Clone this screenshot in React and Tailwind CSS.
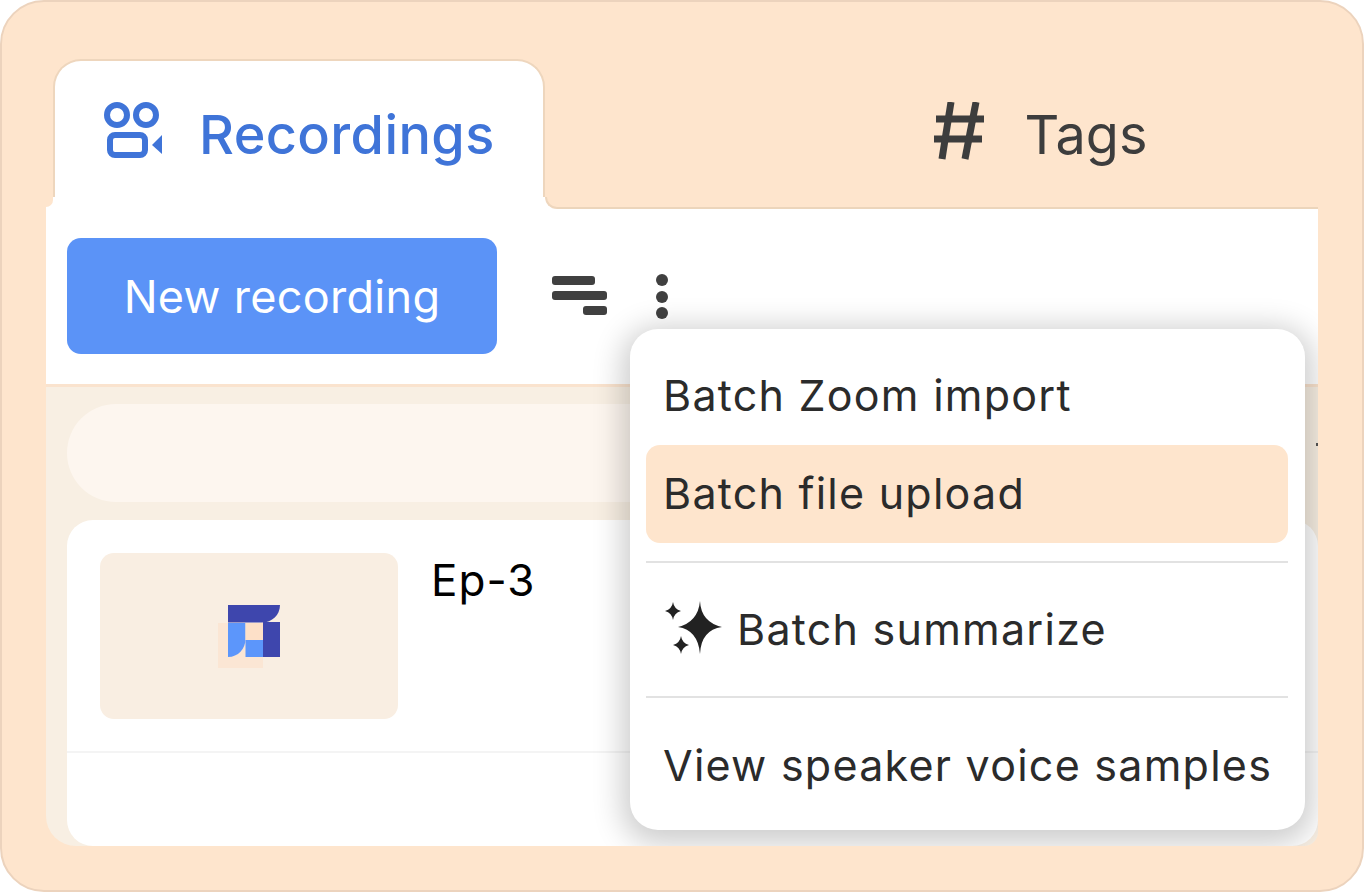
export default function App() {
  const font = "font-['Inter','Liberation_Sans',sans-serif]";
  return (
    <div className={`w-[1364px] h-[892px] bg-white ${font}`}>
      <div className="w-full h-full rounded-[44px] bg-[#fee5cd] border-2 border-[#ecd3bd] pt-[57px] px-[44px] pb-[44px] flex flex-col">
        <div className="flex h-[148px] shrink-0 relative z-10">
          <div className="relative ml-[7px] w-[492px] h-[150px] bg-white rounded-t-[28px] border-x-2 border-t-2 border-[#eed6bd] flex items-start pt-[41px] pl-[47px]">
            <svg width="60" height="60" viewBox="0 0 60 60" className="shrink-0 -mt-[1px]">
              <g fill="none" stroke="#3f74d8" strokeWidth="6">
                <circle cx="15" cy="14" r="10" />
                <circle cx="44" cy="14" r="10" />
                <rect x="8" y="34" width="35" height="20" rx="5" />
              </g>
              <path d="M50 44 L60 34 V53 Z" fill="#3f74d8" />
            </svg>
            <span className="ml-[37px] text-[54px] leading-[66px] font-medium tracking-[0.4px] text-[#3f74d8]">Recordings</span>
            <div className="absolute -left-[2px] -right-[2px] bottom-0 h-[12px] bg-white" />
            <div className="absolute -right-[14px] bottom-0 w-[12px] h-[12px] bg-white">
              <div className="w-full h-full bg-[#fee5cd] rounded-bl-[12px] border-l-2 border-b-2 border-[#eed6bd]" />
            </div>
            <div className="absolute -left-[9px] bottom-0 w-[7px] h-[10px] bg-white">
              <div className="w-full h-[8px] bg-[#fee5cd] rounded-br-[8px]" />
            </div>
          </div>
          <div className="ml-[249px] w-[492px] flex items-start justify-center pt-[43px]">
            <svg width="60" height="64" viewBox="0 0 60 64" className="shrink-0">
              <g stroke="#3d3d3d" strokeWidth="7" fill="none">
                <path d="M3 17 H51" />
                <path d="M1 37 H49" />
                <path d="M18 0 L9 57" />
                <path d="M43 0 L32 57" />
              </g>
            </svg>
            <span className="ml-[32px] text-[54px] leading-[66px] text-[#3d3d3d]">Tags</span>
          </div>
        </div>
        <div className="relative flex-1 min-h-0 flex flex-col overflow-hidden rounded-bl-[30px] rounded-br-[14px] bg-[#f8efe3]">
          <div className="h-[180px] shrink-0 bg-white border-t-2 border-b-[3px] border-t-[#ecd5bb] border-b-[#fae3ce] flex items-start pt-[29px] pl-[21px]">
            <button className="w-[430px] h-[116px] rounded-[14px] bg-[#5b93f7] text-white text-[45px] tracking-[0.3px] leading-none">New recording</button>
            <svg width="130" height="60" viewBox="0 0 130 60" className="ml-[55px] mt-[29px] shrink-0">
              <g fill="#404040">
                <rect x="0" y="9" width="43" height="9" rx="3" />
                <rect x="0" y="24" width="55" height="9" rx="3" />
                <rect x="31" y="39" width="24" height="9" rx="3" />
                <circle cx="110" cy="13" r="6" />
                <circle cx="110" cy="30" r="6" />
                <circle cx="110" cy="46" r="6" />
              </g>
            </svg>
          </div>
          <div className="flex-1 min-h-0 flex flex-col px-[21px] pt-[17px]">
            <div className="h-[98px] shrink-0 rounded-full bg-[#fdf6ef]" />
            <div className="mt-[18px] -mr-[21px] flex-1 min-h-0 bg-white rounded-[26px] overflow-hidden">
              <div className="h-[233px] border-b-2 border-[#f4f4f4] flex items-start pt-[33px] pl-[33px]">
                <div className="w-[298px] h-[166px] rounded-[14px] bg-[#f9eee2] flex items-start pt-[52px] pl-[118px] shrink-0">
                  <svg width="62" height="64" viewBox="218 605 62 64">
                    <rect x="218" y="623" width="45" height="45" fill="#fbe6d4" />
                    <path d="M228 605 H280 C280 615 272 622.5 262 622.5 H228 Z" fill="#3e46ad" />
                    <rect x="263" y="622" width="17" height="35" fill="#3e46ad" />
                    <path d="M228 623 H245.5 V639 C245.5 649 238 657 228 657 Z" fill="#5c96fb" />
                    <rect x="245.5" y="640" width="17.5" height="17" fill="#5c96fb" />
                    <rect x="245.5" y="623" width="17.5" height="17" fill="#fde0c8" />
                  </svg>
                </div>
                <span className="ml-[33px] -mt-[1px] text-[44px] tracking-[1px] leading-[56px] text-black">Ep-3</span>
              </div>
            </div>
          </div>
          <div className="absolute left-[1270px] top-[236px] w-[2px] h-[3px] bg-[#555555]" />
          <div className="absolute left-[584px] top-[122px] w-[675px] h-[501px] rounded-[28px] bg-white shadow-[0_6px_30px_8px_rgba(0,0,0,0.2)] pt-[17px] pl-[16px] pr-[17px] text-[43px] leading-[56px] text-[#2b2b2b] tracking-[1.25px]">
            <div className="h-[99px] flex items-center pl-[17px] pb-[2px]">Batch Zoom import</div>
            <div className="h-[98px] flex items-center pl-[17px] pb-[2px] rounded-[14px] bg-[#fee5cd]">Batch file upload</div>
            <div className="mt-[18px] h-[2px] bg-[#e2e2e2]" />
            <div className="mt-[18px] h-[98px] flex items-center pl-[17px]">
              <svg width="60" height="60" viewBox="0 0 60 60" className="shrink-0 mr-[14px]">
                <g fill="#222222">
                  <path d="M37 1 Q38 22 59 27 Q38 30 37 54 Q35 30 15 27 Q35 22 37 1 Z" />
                  <path d="M10 2 Q11 9 18 11 Q11 13 10 20 Q9 13 2 11 Q9 9 10 2 Z" />
                  <path d="M18 36 Q19 43 26 45 Q19 47 18 54 Q17 47 10 45 Q17 43 18 36 Z" />
                </g>
              </svg>
              <span className="-translate-y-px">Batch summarize</span>
            </div>
            <div className="mt-[17px] h-[2px] bg-[#e2e2e2]" />
            <div className="mt-[19px] h-[98px] flex items-center pl-[17px] pb-[2px]">View speaker voice samples</div>
          </div>
        </div>
      </div>
    </div>
  );
}
